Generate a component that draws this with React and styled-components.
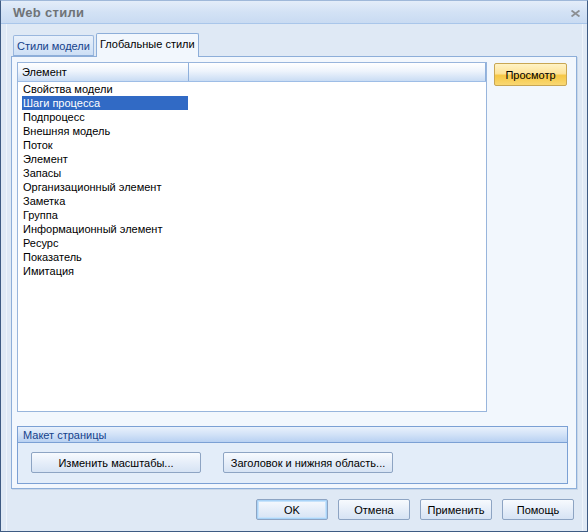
import React from "react";
import styled, { createGlobalStyle } from "styled-components";

const Global = createGlobalStyle`
  html, body { margin: 0; padding: 0; background: #dfe9f5; }
  * { box-sizing: border-box; }
  body { font-family: "Liberation Sans", Arial, sans-serif; font-size: 11px; }
`;

const Window = styled.div`
  width: 588px;
  height: 532px;
  display: flex;
  flex-direction: column;
  background: #dfe9f5;
  border: 1px solid #3e5b83;
  border-top-color: #9fb8d9;
`;

const TitleBar = styled.div`
  height: 23px;
  flex: none;
  display: flex;
  align-items: center;
  justify-content: space-between;
  padding: 0 7px 0 12px;
  background: linear-gradient(#e4edf9, #d3e2f5 50%, #c9dbf2);
  border-bottom: 1px solid #a9c6ea;
`;

const Title = styled.div`
  font-family: "Liberation Sans", Arial, sans-serif;
  font-weight: bold;
  font-size: 13px;
  color: #6f7377;
  letter-spacing: 0.3px;
`;

const Close = styled.svg`
  width: 9px;
  height: 7px;
  margin-top: 2px;
`;

const Body = styled.div`
  flex: 1;
  display: flex;
  flex-direction: column;
  padding: 9px 5px 0 4px;
  margin: 0 4px 0 5px;
  border-left: 1px solid #eef4fb;
  border-right: 1px solid #eef4fb;
`;

const TabStrip = styled.div`
  height: 23px;
  display: flex;
  align-items: flex-end;
  padding-left: 2px;
  position: relative;
  z-index: 1;
`;

const Tab = styled.div`
  height: ${(p) => (p.$active ? "24px" : "21px")};
  margin-bottom: ${(p) => (p.$active ? "-1px" : "0")};
  margin-left: ${(p) => (p.$active ? "2px" : "0")};
  padding: ${(p) => (p.$active ? "0 3px 3px 3px" : "0 3px 0 3px")};
  display: flex;
  align-items: center;
  border: 1px solid ${(p) => (p.$active ? "#8daed9" : "#9ab7de")};
  border-bottom: ${(p) => (p.$active ? "none" : "1px solid #8daed9")};
  border-radius: 2px 2px 0 0;
  background: ${(p) =>
    p.$active ? "#f2f7fd" : "linear-gradient(#e9f1fb, #cddff5)"};
  color: ${(p) => (p.$active ? "#000" : "#15428b")};
  font-size: 11px;
  white-space: nowrap;
`;

const Panel = styled.div`
  height: 433px;
  border: 1px solid #8daed9;
  background: #f2f7fd;
  padding: 5px 0 0 5px;
  display: flex;
  flex-direction: column;
  box-shadow: 1px 1px 0 #c9d7e8;
`;

const TopRow = styled.div`
  display: flex;
  gap: 7px;
  align-items: flex-start;
`;

const ListBox = styled.div`
  width: 470px;
  height: 350px;
  border: 1px solid #98b5dc;
  background: #fff;
`;

const Header = styled.div`
  height: 19px;
  display: flex;
  background: linear-gradient(#ffffff, #eef4fc 45%, #c9dcf4);
  border-bottom: 1px solid #9ebde6;
`;

const HeaderCell = styled.div`
  width: ${(p) => p.$w};
  flex: ${(p) => (p.$grow ? 1 : "none")};
  padding-left: 4px;
  display: flex;
  align-items: center;
  border-right: 1px solid #8fb0dc;
  color: #000;
`;

const Items = styled.div`
  padding: 0 0 0 4px;
`;

const Item = styled.div`
  width: 166px;
  height: 14px;
  line-height: 14px;
  padding-left: 1px;
  background: ${(p) => (p.$selected ? "#316ac5" : "transparent")};
  color: ${(p) => (p.$selected ? "#fff" : "#000")};
  white-space: nowrap;
`;

const GoldButton = styled.button`
  width: 73px;
  height: 23px;
  margin-top: 1px;
  border: 1px solid #c8a654;
  border-radius: 2px;
  background: linear-gradient(#fff3c6, #fde39a 45%, #f6c745 55%, #f9d873);
  font-family: "Liberation Sans", Arial, sans-serif;
  font-size: 11px;
  font-weight: normal;
  color: #000;
  padding: 0;
`;

const Group = styled.div`
  margin-top: 14px;
  width: 551px;
  height: 58px;
  border: 1px solid #7ba0d4;
  background: #e3edf9;
  display: flex;
  flex-direction: column;
`;

const GroupHeader = styled.div`
  height: 16px;
  padding-left: 5px;
  display: flex;
  align-items: center;
  color: #15428b;
  background: linear-gradient(#e9f1fc, #d2e2f7 50%, #b8d1f2);
  border-bottom: 1px solid #7ba0d4;
`;

const GroupBody = styled.div`
  display: flex;
  gap: 22px;
  padding: 9px 0 0 13px;
`;

const Button = styled.button`
  width: ${(p) => p.$w || "72px"};
  height: 21px;
  border: 1px solid #8da4c3;
  border-radius: 2px;
  background: linear-gradient(#f7fafe, #e6eef9 50%, #d6e3f4);
  font-family: "Liberation Sans", Arial, sans-serif;
  font-size: 11px;
  color: #000;
  padding: 0;
  box-shadow: ${(p) =>
    p.$default ? "inset 0 0 0 1px #a9d3f7, inset 0 0 0 2px #c7e3fb" : "none"};
`;

const Footer = styled.div`
  display: flex;
  justify-content: flex-end;
  gap: 10px;
  padding: 10px 3px 0 0;
`;

const items = [
  "Свойства модели",
  "Шаги процесса",
  "Подпроцесс",
  "Внешняя модель",
  "Поток",
  "Элемент",
  "Запасы",
  "Организационный элемент",
  "Заметка",
  "Группа",
  "Информационный элемент",
  "Ресурс",
  "Показатель",
  "Имитация",
];

export default function App() {
  return (
    <>
      <Global />
      <Window>
        <TitleBar>
          <Title>Web стили</Title>
          <Close viewBox="0 0 9 7">
            <path
              d="M0.5 0.5 L8.5 6.5 M8.5 0.5 L0.5 6.5"
              stroke="#8c8f93"
              strokeWidth="1.8"
            />
          </Close>
        </TitleBar>
        <Body>
          <TabStrip>
            <Tab>Стили модели</Tab>
            <Tab $active>Глобальные стили</Tab>
          </TabStrip>
          <Panel>
            <TopRow>
              <ListBox>
                <Header>
                  <HeaderCell $w="171px">Элемент</HeaderCell>
                  <HeaderCell $grow />
                </Header>
                <Items>
                  {items.map((t, i) => (
                    <Item key={t} $selected={i === 1}>
                      {t}
                    </Item>
                  ))}
                </Items>
              </ListBox>
              <GoldButton>Просмотр</GoldButton>
            </TopRow>
            <Group>
              <GroupHeader>Макет страницы</GroupHeader>
              <GroupBody>
                <Button $w="170px">Изменить масштабы...</Button>
                <Button $w="170px">Заголовок и нижняя область...</Button>
              </GroupBody>
            </Group>
          </Panel>
          <Footer>
            <Button $default>OK</Button>
            <Button>Отмена</Button>
            <Button>Применить</Button>
            <Button>Помощь</Button>
          </Footer>
        </Body>
      </Window>
    </>
  );
}
